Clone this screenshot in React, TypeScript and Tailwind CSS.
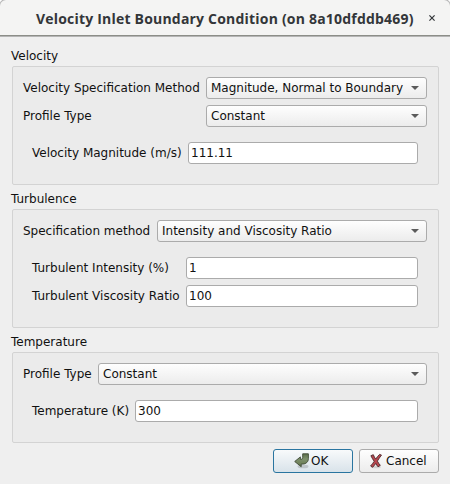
import type { ReactNode } from "react";

function Section({ title, height, children }: { title: string; height: string; children: ReactNode }) {
  return (
    <section className="mb-1">
      <h2 className="h-5 pl-[11px] leading-5">{title}</h2>
      <div className={`mr-[11px] ml-3 rounded-[2px] border border-[#d3d3d3] bg-[#ebebeb] px-[10px] pt-[10px] ${height}`}>
        {children}
      </div>
    </section>
  );
}

function Row({ label, children, className = "" }: { label: string; children: ReactNode; className?: string }) {
  return (
    <div className={`flex h-[22px] items-center justify-between ${className}`}>
      <span className="whitespace-nowrap">{label}</span>
      {children}
    </div>
  );
}

function Combo({ value, width }: { value: string; width: string }) {
  return (
    <button
      className={`mr-px flex h-[22px] shrink-0 items-center justify-between rounded-[3px] border border-[#ababab] bg-linear-to-b from-[#fefefe] to-[#ececec] pr-[7px] pl-1 whitespace-nowrap ${width}`}
    >
      <span>{value}</span>
      <svg width="8" height="4" viewBox="0 0 8 4">
        <path d="M0 0H8L4 4Z" fill="#5b5b5b" />
      </svg>
    </button>
  );
}

function Field({ value, width }: { value: string; width: string }) {
  return (
    <div className={`flex h-[22px] shrink-0 items-center rounded-[3px] border border-[#ababab] bg-white pl-[2px] ${width}`}>
      {value}
    </div>
  );
}

function ApplyIcon() {
  return (
    <svg width="16" height="16" viewBox="0 0 16 16">
      <defs>
        <linearGradient id="apply" x1="0" y1="0" x2="0" y2="1">
          <stop offset="0" stopColor="#5a6d4a" />
          <stop offset="0.4" stopColor="#7d906c" />
          <stop offset="1" stopColor="#65784f" />
        </linearGradient>
      </defs>
      <ellipse cx="9" cy="13.4" rx="5.5" ry="1.9" fill="#000" opacity="0.15" />
      <path
        d="M8.7 0.8H14.4V5.5C14.4 8.8 12.2 11 8.3 11.1H7.2V13.7L0.7 8.5L6.4 3.9V6.3C8.2 6.3 8.7 5.8 8.7 4.6Z"
        fill="url(#apply)"
        stroke="#3e4a34"
        strokeWidth="0.9"
        strokeLinejoin="round"
      />
    </svg>
  );
}

function CancelIcon() {
  return (
    <svg width="16" height="16" viewBox="0 0 16 16">
      <ellipse cx="8" cy="14" rx="5" ry="1.3" fill="#000" opacity="0.12" />
      <path
        d="M2.9 2.7L5.3 1.7C6 3.4 6.7 4.8 7.7 6.1C8.8 4.4 10 2.9 11.6 1.4L13.5 2.1C11.9 4.1 10.6 6 9.4 8.1C10.2 9.6 11.1 11 12.3 12.4L10 13.8C9.1 12.7 8.4 11.6 7.8 10.4C6.8 11.8 5.8 13.1 4.6 14.3L2.6 13C4 11.5 5.1 10 6.2 8.3C5 6.6 3.8 4.8 2.9 2.7Z"
        fill="#b8474f"
        stroke="#4d2a2e"
        strokeWidth="0.9"
        strokeLinejoin="round"
      />
    </svg>
  );
}

export default function App() {
  return (
    <div className="h-[484px] w-[450px] overflow-hidden bg-[#efefef] font-['DejaVu_Sans',sans-serif] text-[12px] leading-[14px] text-[#111]">
      <div className="bg-white">
        <header className="flex h-9 items-center rounded-t-[6px] border-b border-[#8c8e88] bg-[#f4f4f3] pl-9 shadow-[0_0_0_1px_#b5b5b5]">
          <h1 className="w-[378px] pt-[2px] font-['Open_Sans',sans-serif] text-[14px] leading-5 font-bold tracking-[0.2px] whitespace-nowrap text-[#333639]">
            Velocity Inlet Boundary Condition (on 8a10dfddb469)
          </h1>
          <svg className="ml-[15px]" width="6" height="6" viewBox="0 0 6 6">
            <path d="M0.4 0.4L5.6 5.6M5.6 0.4L0.4 5.6" stroke="#333639" strokeWidth="1.2" />
          </svg>
        </header>
      </div>
      <main className="pt-[10px]">
        <Section title="Velocity" height="h-[119px]">
          <Row label="Velocity Specification Method">
            <Combo value="Magnitude, Normal to Boundary" width="w-[221px]" />
          </Row>
          <Row label="Profile Type" className="mt-[6px]">
            <Combo value="Constant" width="w-[221px]" />
          </Row>
          <Row label="Velocity Magnitude (m/s)" className="mt-[15px] mr-[10px] ml-[9px]">
            <Field value="111.11" width="w-[230px]" />
          </Row>
        </Section>
        <Section title="Turbulence" height="h-[119px]">
          <Row label="Specification method">
            <Combo value="Intensity and Viscosity Ratio" width="w-[270px]" />
          </Row>
          <Row label="Turbulent Intensity (%)" className="mt-[15px] mr-[10px] ml-[9px]">
            <Field value="1" width="w-[232px]" />
          </Row>
          <Row label="Turbulent Viscosity Ratio" className="mt-[6px] mr-[10px] ml-[9px]">
            <Field value="100" width="w-[232px]" />
          </Row>
        </Section>
        <Section title="Temperature" height="h-[91px]">
          <Row label="Profile Type">
            <Combo value="Constant" width="w-[329px]" />
          </Row>
          <Row label="Temperature (K)" className="mt-[15px] mr-[10px] ml-[9px]">
            <Field value="300" width="w-[283px]" />
          </Row>
        </Section>
        <footer className="mt-[6px] mr-[11px] flex justify-end gap-[6px]">
          <button className="flex h-6 w-20 items-center rounded-[3px] border border-[#2a75a0] bg-linear-to-b from-[#f8fafb] to-[#d9e3ea] pl-5">
            <ApplyIcon />
            <span className="ml-px">OK</span>
          </button>
          <button className="flex h-6 w-20 items-center rounded-[3px] border border-[#ababab] bg-linear-to-b from-[#fefefe] to-[#ececec] pl-2">
            <CancelIcon />
            <span className="ml-[2px]">Cancel</span>
          </button>
        </footer>
      </main>
    </div>
  );
}
